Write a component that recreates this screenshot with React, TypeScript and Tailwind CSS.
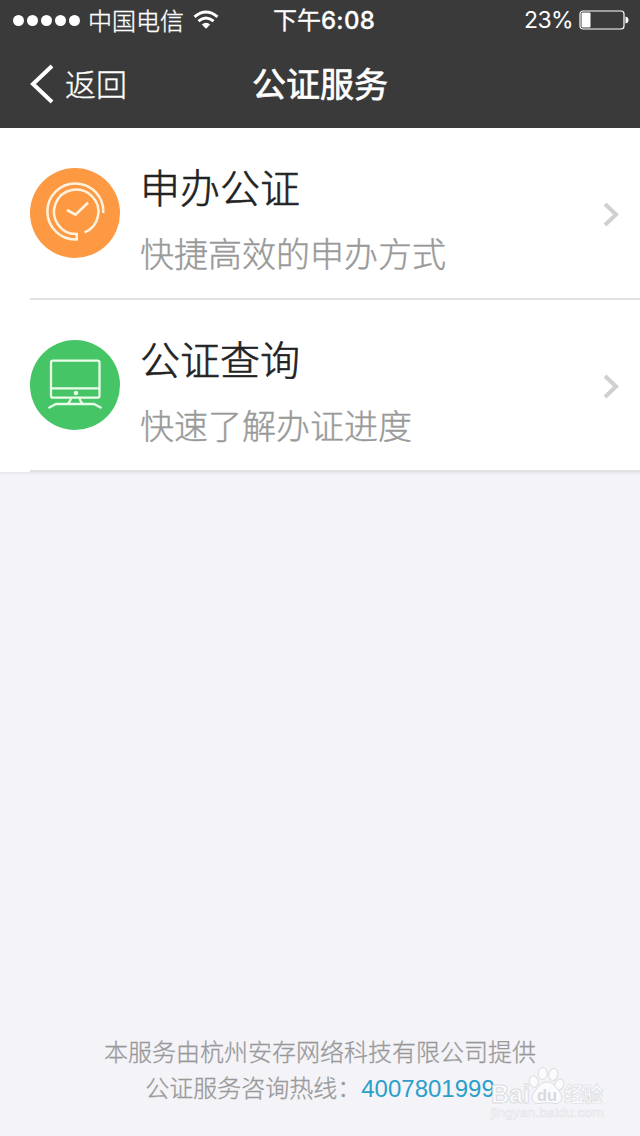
import type { ReactNode } from "react";

const services = [
  { id: "apply", title: "申办公证", desc: "快捷高效的申办方式", color: "bg-[#fd9843]", icon: <ClockIcon /> },
  { id: "query", title: "公证查询", desc: "快速了解办证进度", color: "bg-[#45c565]", icon: <MonitorIcon /> },
];

function ClockIcon() {
  return (
    <svg width="90" height="90" viewBox="0 0 90 90" fill="none" stroke="#fff3df" strokeWidth="2.5">
      <path d="M73.3 45A28 28 0 1 0 46.7 71.4V66A22.2 22.2 0 1 1 54.5 64.4" />
      <path d="M37 42L45.5 46.7L58 34.7" strokeWidth="2.6" />
    </svg>
  );
}

function MonitorIcon() {
  return (
    <svg width="90" height="90" viewBox="0 0 90 90" fill="none" stroke="#e9fbe9" strokeWidth="2.3">
      <rect x="21" y="20.7" width="48.5" height="37" rx="2" />
      <path d="M21 48.3H69M41 58.5Q40 62 37.5 64M49.5 58.5Q50.5 62 53 64M18.5 68L26 64H64L71.5 68" />
      <circle cx="46" cy="53" r="2.3" fill="#e9fbe9" stroke="none" />
    </svg>
  );
}

function StatusBar() {
  return (
    <div className="relative flex h-10 items-center justify-between pr-[11px] pl-[13px] text-2xl leading-10">
      <div className="flex items-center">
        <div className="flex gap-[3px]">
          {[0, 1, 2, 3, 4].map((n) => (
            <span key={n} className="size-[11px] rounded-full bg-white" />
          ))}
        </div>
        <span className="ml-2 font-light [-webkit-text-stroke:0.35px]">中国电信</span>
        <svg className="ml-[9px]" width="26" height="20" viewBox="0 0 26 20" fill="none" stroke="white" strokeWidth="3">
          <path d="M1.5 6.8Q13 -2.7 24.5 6.8M5.4 11.2Q13 4.8 20.6 11.2" />
          <path d="M8.8 14.5Q13 11 17.2 14.5L13 18.7Z" fill="white" stroke="none" />
        </svg>
      </div>
      <span className="absolute inset-x-0 pl-2 text-center font-normal [-webkit-text-stroke:0.3px]">
        下午<span className="font-['Inter'] font-medium tracking-[0.3px]">6:08</span>
      </span>
      <div className="flex items-center">
        <span className="font-['Inter'] text-[23px] tracking-[-0.6px]">23%</span>
        <svg className="ml-1.5" width="50" height="20" viewBox="0 0 50 20" fill="white">
          <rect x="1" y="1" width="44" height="18" rx="3" fill="none" stroke="white" strokeWidth="1.2" />
          <rect x="2.5" y="2.5" width="9" height="15" rx="1" />
          <path d="M46.5 6.5Q49.5 7 49.5 10T46.5 13.5Z" />
        </svg>
      </div>
    </div>
  );
}

function NavBar() {
  return (
    <div className="relative flex h-[88px] items-center">
      <button className="flex items-center pl-[30px] text-[31px] leading-[44px] font-light">
        <svg width="25" height="40" viewBox="0 0 25 40" fill="none" stroke="white" strokeWidth="4">
          <path d="M22 2L3 20L22 38" />
        </svg>
        <span className="mb-0.5 ml-[10px] [-webkit-text-stroke:0.35px]">返回</span>
      </button>
      <h1 className="pointer-events-none absolute inset-x-0 pb-0.5 text-center text-[34px] leading-[44px] font-normal [-webkit-text-stroke:0.7px]">
        公证服务
      </h1>
    </div>
  );
}

function ServiceRow({ title, desc, color, icon }: { title: string; desc: string; color: string; icon: ReactNode }) {
  return (
    <li className="ml-[30px] flex h-[172px] border-b-2 border-[#e1e1e3]">
      <div className={`mt-10 size-[90px] shrink-0 rounded-full ${color}`}>{icon}</div>
      <div className="ml-5 flex-1 pt-7">
        <h2 className="text-[40px] leading-[60px] font-light text-[#222] [-webkit-text-stroke:0.6px]">{title}</h2>
        <p className="mt-[13px] text-[34px] leading-[48px] font-light text-[#999] [-webkit-text-stroke:0.4px]">{desc}</p>
      </div>
      <svg className="mt-[73px] mr-5" width="18" height="26" viewBox="0 0 18 26" fill="none" stroke="#d0d0d2" strokeWidth="4">
        <path d="M3 3L14 13.5L3 24" />
      </svg>
    </li>
  );
}

function Watermark() {
  return (
    <div className="absolute top-[1064px] left-[490px] w-[130px] font-['Liberation_Sans']">
      <svg width="118" height="58" viewBox="0 0 118 58" fill="#fbfbfd" stroke="#dcdce0" strokeWidth="1">
        <ellipse cx="43.7" cy="17.5" rx="4.4" ry="5.8" transform="rotate(-18 43.7 17.5)" />
        <ellipse cx="52.7" cy="9.5" rx="4.5" ry="6" />
        <ellipse cx="63.3" cy="10.5" rx="4.5" ry="6" transform="rotate(12 63.3 10.5)" />
        <ellipse cx="69.3" cy="20.5" rx="4.4" ry="5.8" transform="rotate(24 69.3 20.5)" />
        <path d="M57 18C64 18 65 23 69 27C74 32 72 40 65 39.5C60 38.5 54 38.5 49 39.5C41 40 40 32 45 27C49 23 50 18 57 18Z" />
        <g fontWeight="bold">
          <text x="1" y="38.5" fontSize="25" textLength="39" lengthAdjust="spacingAndGlyphs">Bai</text>
          <text x="47" y="36.5" fontSize="17" fill="#d8d8dd" stroke="none" textLength="20" lengthAdjust="spacingAndGlyphs">du</text>
          <text x="74" y="38" fontSize="20" strokeWidth="0.7" fontFamily="Noto Sans CJK SC, sans-serif" textLength="39">经验</text>
        </g>
        <text x="1" y="53" fontSize="13" stroke="#e4e4e8" strokeWidth="0.6" textLength="113" lengthAdjust="spacingAndGlyphs">jingyan.baidu.com</text>
      </svg>
    </div>
  );
}

export default function App() {
  return (
    <div className="relative flex h-[1136px] w-[640px] flex-col overflow-hidden bg-[#f3f3f8] font-['Noto_Sans_CJK_SC',sans-serif]">
      <header className="bg-[#3a3a3a] text-white">
        <StatusBar />
        <NavBar />
      </header>
      <ul className="bg-white shadow-[0_2px_0_#e9e9ee]">
        {services.map(({ id, ...service }) => (
          <ServiceRow key={id} {...service} />
        ))}
      </ul>
      <footer className="mt-auto pb-[29px] text-center text-2xl leading-9 font-light text-[#999] [-webkit-text-stroke:0.3px]">
        <p>本服务由杭州安存网络科技有限公司提供</p>
        <p>
          公证服务咨询热线：
          <a href="tel:4007801999" className="font-['Liberation_Sans'] font-normal text-[#2a9fc9] [-webkit-text-stroke:0]">4007801999</a>
        </p>
      </footer>
      <Watermark />
    </div>
  );
}
